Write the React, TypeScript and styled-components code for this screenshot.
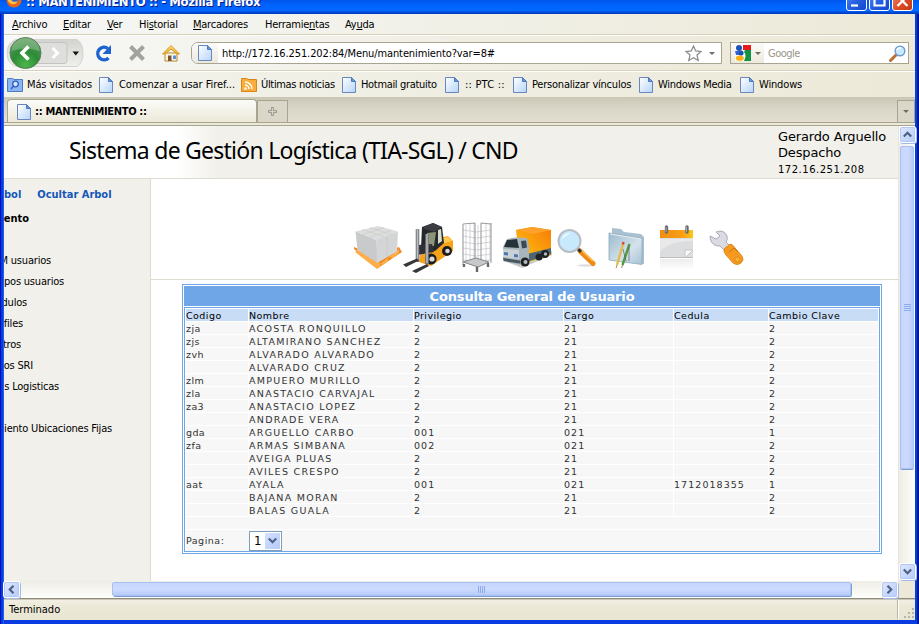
import React from "react";
import styled, { createGlobalStyle } from "styled-components";

const tahoma = '"DejaVu Sans Condensed", "DejaVu Sans", sans-serif';
const verdana = '"DejaVu Sans", sans-serif';

const Global = createGlobalStyle`
  *, *::before, *::after { box-sizing: border-box; }
  body { margin: 0; background: #0831d9; font: 11px/14px ${tahoma}; color: #000; }
  svg { display: block; flex: none; }
`;

const Window = styled.div`
  width: 919px;
  height: 624px;
  overflow: hidden;
  display: flex;
  flex-direction: column;
  background: linear-gradient(90deg, #0010b8 0 1px, #0a3be0 1px 3px, #1763ee 3px 4px, #0a3be0 4px 915px, #0340d8 915px 917px, #001ea0 917px 918px, #00138c 918px);
`;
const TitleBar = styled.div`
  height: 14px;
  flex: none;
  display: flex;
  justify-content: space-between;
  padding: 0 6px 0 6px;
  overflow: hidden;
  background: linear-gradient(#0054e9, #0062fb 30%, #0068ff 75%, #0047d2 90%, #003ab8);
`;
const Caption = styled.div`
  display: flex;
  gap: 4px;
  height: 20px;
  margin-top: -8px;
  font: bold 13px/20px ${tahoma};
  letter-spacing: -0.4px;
  white-space: nowrap;
  color: #fff;
  text-shadow: 1px 1px #0a1883;
`;
const CaptionButtons = styled.div`
  display: flex;
  gap: 2px;
  margin-top: -10px;
`;
const CaptionButton = styled.div<{ $close?: boolean }>`
  width: 21px;
  height: 21px;
  border: 1px solid #fff;
  border-radius: 3px;
  background: ${(p) => (p.$close ? "linear-gradient(135deg,#f08a6c,#dc4a22 60%,#c03a12)" : "linear-gradient(135deg,#5a8cf5,#2760e4 50%,#1546c8)")};
`;
const Client = styled.div`
  margin: 0 4px;
  height: 606px;
  flex: none;
  display: flex;
  flex-direction: column;
  background: #ece9d8;
`;
const MenuBar = styled.nav`
  height: 21px;
  flex: none;
  display: grid;
  grid-template-columns: 51px 44px 32px 54px 72px 80px 60px;
  padding: 4px 0 0 8px;
  border-bottom: 1px solid #d6d0b6;
  background: linear-gradient(90deg, #f6f7f6, #ece9d8);
  letter-spacing: -0.25px;
  white-space: nowrap;
`;
const Toolbar = styled.div`
  height: 36px;
  flex: none;
  display: flex;
  align-items: center;
  border-top: 1px solid #fff;
  border-bottom: 1px solid #d8d2b8;
  background: linear-gradient(90deg, #f7f8f7, #efece0 60%, #ece9d8);
`;
const NavIcons = styled.div`
  width: 187px;
  flex: none;
`;
const Field = styled.div<{ $w: number; $ml?: number }>`
  width: ${(p) => p.$w}px;
  height: 22px;
  flex: none;
  margin-left: ${(p) => p.$ml ?? 0}px;
  display: flex;
  align-items: center;
  border: 1px solid #a7a490;
  background: #fff;
  overflow: hidden;
  white-space: nowrap;
`;
const AddressField = styled(Field)`
  border-radius: 7px 0 0 7px;
  letter-spacing: -0.11px;
`;
const FieldIcon = styled.div<{ $w: number; $plain?: boolean }>`
  width: ${(p) => p.$w}px;
  height: 100%;
  flex: none;
  display: flex;
  align-items: center;
  justify-content: center;
  gap: 4px;
  background: ${(p) => (p.$plain ? "none" : "linear-gradient(#fbfbf9, #ece9dc)")};
`;
const FieldText = styled.span<{ $hint?: boolean }>`
  flex: 1;
  padding: 2px 0 0 4px;
  color: ${(p) => (p.$hint ? "#99968a" : "#000")};
  letter-spacing: ${(p) => (p.$hint ? "-0.5px" : "inherit")};
`;
const Bookmarks = styled.div`
  height: 26px;
  flex: none;
  display: flex;
  align-items: center;
  border-top: 1px solid #fff;
  background: linear-gradient(90deg, #f3f3ed, #ece9d8);
  padding-left: 3px;
`;
const Bookmark = styled.div<{ $w: number; $gap: number; $ls: number }>`
  width: ${(p) => p.$w}px;
  flex: none;
  display: flex;
  align-items: center;
  gap: ${(p) => p.$gap}px;
  letter-spacing: ${(p) => p.$ls}px;
  white-space: nowrap;
`;
const TabStrip = styled.div`
  height: 26px;
  flex: none;
  display: flex;
  align-items: flex-end;
  border-bottom: 1px solid #a7a490;
  background: linear-gradient(#c9c6b6, #d6d3c4 35%, #e3e0d1);
`;
const Tab = styled.div`
  width: 250px;
  height: 23px;
  margin: 0 0 0 3px;
  display: flex;
  align-items: center;
  gap: 4px;
  padding: 2px 0 0 9px;
  border: 1px solid #a7a490;
  border-bottom: 0;
  border-radius: 4px 4px 0 0;
  background: linear-gradient(#fbfbf8, #ece9d8);
  font-weight: bold;
  letter-spacing: -0.32px;
`;
const TabButton = styled.div<{ $w: number }>`
  width: ${(p) => p.$w}px;
  height: 22px;
  display: flex;
  align-items: center;
  justify-content: center;
  border: 1px solid #a7a490;
  border-bottom: 0;
  background: #dad7c8;
`;
const Grow = styled.div`
  flex: 1;
`;
const ContentEdge = styled.div`
  height: 3px;
  flex: none;
  background: #ece9d8;
  border-bottom: 1px solid #a7a490;
`;
const Viewport = styled.div`
  height: 455px;
  flex: none;
  display: flex;
`;
const Page = styled.main`
  width: 894px;
  display: flex;
  flex-direction: column;
  background: #fff;
`;
const Banner = styled.header`
  height: 53px;
  flex: none;
  display: flex;
  justify-content: space-between;
  border-bottom: 1px solid #dedbcf;
  background: linear-gradient(90deg, #fff 172px, #f1f0eb 215px);
`;
const SystemName = styled.h1`
  margin: 5px 0 0 65px;
  font: 23px/38px "Noto Sans", sans-serif;
  letter-spacing: -0.75px;
  white-space: nowrap;
`;
const UserInfo = styled.div`
  width: 120px;
  padding-top: 3px;
  font: 13px/16px ${verdana};
  letter-spacing: -0.15px;
  white-space: nowrap;
`;
const Address = styled.div`
  font-size: 10px;
  line-height: 17px;
  letter-spacing: 0.5px;
`;
const Body = styled.div`
  flex: 1;
  display: flex;
`;
const Sidebar = styled.aside`
  width: 147px;
  flex: none;
  border-right: 1px solid #dedbcf;
  background: #f1f0eb;
  padding-top: 5px;
`;
const TreeActions = styled.div`
  display: flex;
  gap: 16px;
  height: 24px;
  line-height: 21px;
  font-weight: bold;
  color: #1557b8;
  white-space: nowrap;
`;
const TreeItem = styled.div<{ $end: number; $bold?: boolean; $rows?: number }>`
  width: ${(p) => p.$end}px;
  height: ${(p) => (p.$rows ?? 1) * 21}px;
  line-height: 21px;
  display: flex;
  justify-content: flex-end;
  overflow: hidden;
  white-space: nowrap;
  letter-spacing: ${(p) => (p.$bold ? 0 : -0.2)}px;
  font-weight: ${(p) => (p.$bold ? "bold" : "normal")};
`;
const Main = styled.section`
  flex: 1;
`;
const IconStrip = styled.div`
  height: 101px;
  display: flex;
  padding: 41px 0 0 203px;
  border-bottom: 1px solid #dedbcf;
`;
const Panel = styled.div`
  width: 700px;
  height: 270px;
  margin: 4px 0 0 31px;
  padding: 1px;
  border: 1px solid #6ea6e8;
`;
const PanelTitle = styled.div`
  height: 20px;
  margin-bottom: 1px;
  text-align: center;
  font: bold 13px/22px ${verdana};
  letter-spacing: -0.16px;
  color: #fff;
  background: #6ea6e8;
`;
const Grid = styled.div`
  height: 245px;
  padding: 1px;
  border: 1px solid #6ea6e8;
  display: grid;
  grid-template-columns: 62px 164px 149px 109px 94px 109px;
  grid-auto-rows: 12px;
  gap: 1px;
  font: 9.5px/14px ${verdana};
  white-space: nowrap;
  color: #333;
`;
const HeadCell = styled.div`
  background: #c8dcf6;
  color: #000;
  letter-spacing: 0.45px;
`;
const Cell = styled.div<{ $kind: "code" | "name" | "num" }>`
  background: #f7f7f7;
  letter-spacing: ${(p) => (p.$kind === "name" ? 1.28 : p.$kind === "num" ? 1.05 : 0.4)}px;
`;
const BlankRow = styled.div`
  grid-column: 1 / -1;
  background: #f7f7f7;
`;
const Pager = styled.div`
  grid-column: 1 / -1;
  height: 21px;
  display: flex;
  align-items: center;
  background: #f7f7f7;
`;
const PagerLabel = styled.span`
  width: 63px;
  padding-top: 1px;
  letter-spacing: 0.5px;
`;
const Select = styled.div`
  width: 33px;
  height: 20px;
  display: flex;
  align-items: center;
  justify-content: space-between;
  padding: 1px 1px 1px 4px;
  border: 1px solid #7f9db9;
  background: #fff;
  font: 13px/16px ${tahoma};
  color: #000;
`;
const SelectArrow = styled.div`
  width: 15px;
  height: 16px;
  display: grid;
  place-items: center;
  border-radius: 1px;
  background: linear-gradient(135deg, #d5e1fd, #b4caf8);
`;
const VScroll = styled.div`
  width: 17px;
  flex: none;
  display: flex;
  flex-direction: column;
  padding: 1px 0 0 1px;
  background: linear-gradient(90deg, #eeede5, #fefefb);
  border-left: 1px solid #e8e6dc;
`;
const HScroll = styled.div`
  height: 18px;
  flex: none;
  display: flex;
  padding-top: 1px;
  border-bottom: 1px solid #8f8c7d;
  background: linear-gradient(#eeede5, #fefefb);
`;
const ScrollButton = styled.div`
  width: 15px;
  height: 15px;
  flex: none;
  display: grid;
  place-items: center;
  border: 1px solid #b4c8f5;
  border-radius: 2px;
  box-shadow: 0 0 0 1px #fff, 1px 1px 0 1px #9fb9e8;
  background: linear-gradient(135deg, #dce6fe, #b9cdfb);
`;
const VThumb = styled.div`
  width: 14px;
  height: 323px;
  margin: 4px 0 95px;
  display: grid;
  place-items: center;
  border: 1px solid #a9c0f3;
  border-radius: 2px;
  box-shadow: 0 1px 0 #7c9fd3;
  background: linear-gradient(90deg, #c6d5fd, #cddbff 50%, #b7cbfa);
`;
const HThumb = styled.div`
  width: 739px;
  height: 14px;
  margin: 0 31px 0 93px;
  display: grid;
  place-items: center;
  border: 1px solid #a9c0f3;
  border-radius: 2px;
  box-shadow: 1px 1px 0 #7c9fd3;
  background: linear-gradient(#c6d5fd, #cddbff 50%, #b7cbfa);
`;
const Corner = styled.div`
  flex: 1;
  margin: -1px 0 0 2px;
  background: #ece9d8;
`;
const StatusBar = styled.footer`
  flex: 1;
  display: flex;
  align-items: center;
  justify-content: space-between;
  padding: 0 0 1px 5px;
  border-top: 1px solid #c9c6b8;
  background: linear-gradient(#f1efe4, #ece9d8 30%, #e8e5d2);
`;
const GripArea = styled.div`
  width: 18px;
  height: 19px;
  display: flex;
  align-items: flex-end;
  justify-content: flex-end;
  border-left: 1px solid #b8b5a4;
  box-shadow: inset 1px 0 #fff;
`;

const Underlined = ({ text, at }: { text: string; at: number }) => (
  <span>{text.slice(0, at)}<u>{text[at]}</u>{text.slice(at + 1)}</span>
);

const FileIcon = () => (
  <svg width="14" height="16" viewBox="0 0 14 16">
    <defs><linearGradient id="file" x1="0" y1="0" x2="1" y2="1"><stop offset="0" stopColor="#fff" /><stop offset="1" stopColor="#b5d5fb" /></linearGradient></defs>
    <path d="M.5.5h9l4 4v11H.5z" fill="url(#file)" stroke="#6b86bd" />
    <path d="M9.5.5v4h4z" fill="#5e9ae4" stroke="#4f79bf" />
  </svg>
);
const FolderIcon = ({ feed }: { feed?: boolean }) => (
  <svg width="16" height="15" viewBox="0 0 16 15">
    <path d="M.5 2.500V1.500h5l1.500 1h8.500v12H.5z" fill={feed ? "#f8ad3c" : "#8db5f1"} stroke={feed ? "#d88419" : "#4d7bca"} />
    {feed ? (
      <g fill="none" stroke="#fff" strokeWidth="1.500"><circle cx="4.500" cy="11.500" r=".6" /><path d="M4 8a4 4 0 0 1 4 4M4 5a7 7 0 0 1 7 7" /></g>
    ) : (
      <g fill="#d7e7ff" stroke="#2b5fc0" strokeWidth="1.300"><circle cx="8.500" cy="7" r="2.800" /><path d="M6.500 9.200 4 12" /></g>
    )}
  </svg>
);
const Caret = ({ color = "#6f6d62" }: { color?: string }) => (
  <svg width="6" height="3" viewBox="0 0 6 3"><path d="M0 0h6L3 3z" fill={color} /></svg>
);
const Chevron = ({ d }: { d: string }) => (
  <svg width="9" height="9" viewBox="0 0 9 9"><path d={d} fill="none" stroke="#4d6185" strokeWidth="2.200" /></svg>
);
const DOWN = "M.8 2.500 4.500 6.200 8.200 2.500";
const UP = "M.8 6.500 4.500 2.800 8.200 6.500";
const LEFT = "M6.500.8 2.800 4.500 6.500 8.200";
const RIGHT = "M2.500.8 6.200 4.500 2.500 8.200";

const FirefoxIcon = () => (
  <svg width="16" height="16" viewBox="0 0 16 16">
    <circle cx="8" cy="8" r="7.500" fill="#e8651a" />
    <circle cx="8.500" cy="6.500" r="4.500" fill="#3566c0" />
    <path d="M2 5c1 0 3 2 4 4 2 1.500 5 1 6-1-1 5-7 6-10 1z" fill="#ffc247" />
  </svg>
);
const NavDrawing = () => (
  <svg width="187" height="34" viewBox="4 36 187 34">
    <defs>
      <linearGradient id="pill" x1="0" y1="0" x2="0" y2="1"><stop offset="0" stopColor="#d3d3d0" /><stop offset="1" stopColor="#efefec" /></linearGradient>
      <radialGradient id="green" cx=".5" cy=".9" r=".9"><stop offset="0" stopColor="#4cb84a" /><stop offset=".5" stopColor="#2c8b37" /><stop offset="1" stopColor="#5f9d60" /></radialGradient>
      <linearGradient id="roof" x1="0" y1="0" x2="0" y2="1"><stop offset="0" stopColor="#ffe27a" /><stop offset="1" stopColor="#f2ae1c" /></linearGradient>
    </defs>
    <path d="M16 39.500h61q6 4 6 13.500t-6 13.500H16q-9-3-9-13.500t9-13.500z" fill="url(#pill)" stroke="#d3d2cd" />
    <path d="M36 42.500h28q3 0 3 3v15q0 3-3 3H36z" fill="#dededc" stroke="#c4c3bf" />
    <path d="m52.500 48 5 5-5 5" fill="none" stroke="#fff" strokeWidth="3" />
    <path d="M72.500 51.500h6.500l-3.250 4z" fill="#111" />
    <circle cx="25.500" cy="53" r="15.500" fill="url(#green)" stroke="#5a7d5b" />
    <path d="M11.500 51a14 13 0 0 1 28 0q-14-5-28 0z" fill="#fff" opacity=".22" />
    <path d="m28.500 46.500-6.500 6.500 6.500 6.500" fill="none" stroke="#fff" strokeWidth="3.600" />
    <path d="M108.500 58a6.300 6.300 0 1 1-.6-9.500" fill="none" stroke="#1c62d0" strokeWidth="3.400" />
    <path d="M111 45v9h-8.500z" fill="#1c62d0" />
    <path d="m130.500 46.500 13 13m0-13-13 13" stroke="#a2a29e" strokeWidth="4" />
    <path d="M165 53h12v8h-12z" fill="#fdf6df" stroke="#b5852f" />
    <path d="M171 45.500 162.500 54h2.500l6-5 6 5h2.500z" fill="url(#roof)" stroke="#d19a26" />
    <path d="M168 55.500h3.500V61H168z" fill="#7d5132" /><path d="M173 55.500h3V59h-3z" fill="#5892df" />
  </svg>
);
const StarIcon = () => (
  <svg width="17" height="17" viewBox="0 0 17 17"><path d="m8.500 1 2.200 4.900 5.300.6-4 3.600 1.200 5.400-4.700-2.700-4.700 2.700L5 10.100 1 6.500l5.300-.6z" fill="#fff" stroke="#8e8e8e" strokeWidth="1.300" /></svg>
);
const GoogleIcon = () => (
  <svg width="16" height="16" viewBox="0 0 16 16">
    <path d="M0 0h16v16H0z" fill="#fff" /><path d="M8 0h8v5H8z" fill="#e61b1b" /><path d="M10 5h6v11H9q3-6 0-9z" fill="#139344" />
    <circle cx="4" cy="3" r="3" fill="#1c52b5" /><circle cx="6" cy="8" r="2.600" fill="#1c52b5" /><path d="M0 6h4v4H1z" fill="#2b66cc" /><ellipse cx="4.800" cy="13.200" rx="4" ry="2.600" fill="#fbb016" />
  </svg>
);
const SearchIcon = () => (
  <svg width="19" height="17" viewBox="0 0 19 17">
    <path d="m7 10-5.500 5.500" stroke="#b96d31" strokeWidth="3" strokeLinecap="round" />
    <circle cx="11" cy="6" r="4.800" fill="#c9eafd" stroke="#6d9ed0" strokeWidth="1.500" />
    <path d="M8 5q1-2.500 4-2.300" stroke="#fff" strokeWidth="1.500" fill="none" />
  </svg>
);
const CaptionGlyph = ({ d }: { d: string }) => (
  <svg width="19" height="19" viewBox="0 0 19 19"><path d={d} fill="none" stroke="#fff" strokeWidth="2.200" /></svg>
);

const Pallet = () => (
  <svg width="48" height="56" viewBox="354 220 48 56">
    <path d="m354 249 24 19 24-16-3-5-24 9-21-9z" fill="#f08a20" />
    <path d="m355 252 22 17 3-2v-4l-22-15zm25 12 3 1 5-4v-4l5 1 6-5v-4" fill="#ffad48" />
    <path d="M355.500 231.500 378 226l20 5.500-20 9z" fill="#dcdddd" />
    <path d="m355.500 231.500 21 8.500 1 23-20-13z" fill="#c9cacc" />
    <path d="m376.500 240 21.500-8.500-1 20-20 11.500z" fill="#d4d5d6" />
    <path d="m362 229.500 22 7m-14-9 21 7m-28 0 21-7m-15 10 22-7" stroke="#cdccc6" fill="none" strokeWidth=".7" /><path d="M387 236v21" stroke="#c8c9ca" strokeWidth=".7" />
  </svg>
);
const Forklift = () => (
  <svg width="53" height="56" viewBox="402 220 53 56">
    <path d="m435 239 13-3 5 5v10l-22 15-12-4 1-7 14-4z" fill="#f6a31a" />
    <path d="m439 239 9-2 4 4-11 3z" fill="#ffca4d" />
    <path d="m422 227 11-4 9 4 2 16-9 8-14-3z" fill="#27282b" />
    <path d="m427 233 9-1-2 14-6 1z" fill="#8b9679" /><path d="m438 230 3-1 1 12-4 3z" fill="#d7decb" />
    <path d="m422 228 11-5 9 4-8 5z" fill="#3c3d42" />
    <path d="m418 245 14-1 2 8-16 3z" fill="#303136" />
    <circle cx="431" cy="259" r="5.600" fill="#1c1c1f" /><circle cx="432" cy="259" r="2.600" fill="#d8d8d8" />
    <circle cx="447" cy="251" r="5" fill="#1c1c1f" /><circle cx="447.500" cy="251" r="2.300" fill="#d8d8d8" />
    <path d="M417.500 229v33M427 234v30" stroke="#74777c" strokeWidth="3.600" /><path d="M417.500 229v32M427 234v29" stroke="#b9bcc0" strokeWidth="1.500" />
    <path d="m403 264.500 14-6 2 2-13 6.500zM412 271l15-7 2 2-13 7z" fill="#34363a" />
  </svg>
);
const Cage = () => (
  <svg width="45" height="56" viewBox="455 220 45 56">
    <g fill="none" stroke="#c0c2c4" strokeWidth=".7">
      <path d="M466 225v38m4-39v38m4-39v39m4-37v37m8-38v37m4-37v37M463 230l13 2 15-2M463 236l13 2 15-2M463 242l13 2 15-2M463 248l13 2 15-2M463 254l13 2 15-2M463 260l13 1 15-1" />
    </g>
    <path d="M463 224v41m12-42v41m6-41v41m10-41v40M463 224l12-1m6 0 10 1" fill="none" stroke="#9a9da0" strokeWidth="1.100" />
    <path d="m463 262 13-4 13 4-11 5z" fill="#c6c8c9" stroke="#85888b" /><path d="M464 264v3m13 0v5m11-9v4" stroke="#68696c" strokeWidth="2.400" />
  </svg>
);
const Truck = () => (
  <svg width="55" height="56" viewBox="500 220 55 56">
    <defs><linearGradient id="cargo" x1="1" y1="0" x2="0" y2="1"><stop offset="0" stopColor="#f77c08" /><stop offset=".6" stopColor="#fba90c" /><stop offset="1" stopColor="#ffe21a" /></linearGradient></defs>
    <path d="m507 262 15 6 30-13v-4z" fill="#aaa" opacity=".6" />
    <path d="m516 230 16-3 19 3v25l-22 7-10-5z" fill="url(#cargo)" /><path d="m516 230 16-3 19 3-18 4z" fill="#ffa12b" />
    <path d="m527 254 24-6v6l-24 8z" fill="#4e6671" />
    <path d="m507 239 8-1.500 12 .5 2 8v16l-9 3-17-4v-14z" fill="#a9b5bd" />
    <path d="m507 240 10-1 2 9-15-1z" fill="#26323a" /><path d="m521 241 5-.5 1 7-5 1z" fill="#3b4a53" />
    <path d="m503 249 16 1v9l-16-2z" fill="#cbd2d6" /><path d="m504 252 4 .5v3l-4-.5zm10 2 4 .5v3l-4-.5z" fill="#4c77b5" /><path d="m503 258 17 2.500v3L504 261z" fill="#4a565e" />
    <circle cx="525" cy="262" r="4.500" fill="#202326" /><circle cx="525.500" cy="262" r="2" fill="#b5babd" />
    <circle cx="545" cy="254" r="4" fill="#202326" /><circle cx="545.500" cy="254" r="1.700" fill="#b5babd" /><circle cx="539" cy="257" r="3.500" fill="#202326" />
  </svg>
);
const Magnifier = () => (
  <svg width="47" height="56" viewBox="555 220 47 56">
    <ellipse cx="586" cy="265.500" rx="9" ry="1.200" fill="#ddd" />
    <path d="m580 251 13 12.500" stroke="#f08a14" strokeWidth="5" strokeLinecap="round" /><path d="m581 250 12 11" stroke="#ffbd55" strokeWidth="1.500" />
    <path d="m577 248 4 4" stroke="#333" strokeWidth="3" />
    <circle cx="569.500" cy="241" r="11" fill="#c8e8fb" stroke="#b8bec4" strokeWidth="2" /><path d="M562 240q1-7 9-7-6 2-9 7z" fill="#fff" />
  </svg>
);
const PencilFolder = () => (
  <svg width="50" height="56" viewBox="602 220 50 56">
    <defs><linearGradient id="pf" x1="0" y1="0" x2="1" y2="1"><stop offset="0" stopColor="#9dbace" /><stop offset=".6" stopColor="#d4e2ec" /><stop offset="1" stopColor="#a8c1d3" /></linearGradient></defs>
    <path d="m612 228 9 1 3 3 17 2 3 3v27l-32-4z" fill="#a9c0d1" />
    <path d="m609 233 33 5.500v26L609 260z" fill="url(#pf)" stroke="#8daabd" strokeWidth=".8" /><path d="m610 234 31 5" stroke="#e7f0f6" />
    <path d="m623 244-6 21" stroke="#e5bb4a" strokeWidth="2.400" /><path d="m623.500 242-.6 2.500" stroke="#d84630" strokeWidth="2.400" />
    <path d="m629.500 244-7 21" stroke="#4d9d3c" strokeWidth="2.400" /><path d="m617 265-.9 3m6.500-3-1 3" stroke="#a58a66" /><path d="M623 249l3 12m3-15v15" stroke="#56606a" strokeWidth=".7" />
  </svg>
);
const Calendar = () => (
  <svg width="50" height="56" viewBox="652 220 50 56">
    <defs><linearGradient id="cal" x1="0" y1="0" x2="1" y2="0"><stop offset="0" stopColor="#f28c12" /><stop offset=".7" stopColor="#f99f18" /><stop offset="1" stopColor="#ffc812" /></linearGradient>
      <linearGradient id="refl" x1="0" y1="0" x2="0" y2="1"><stop offset="0" stopColor="#ededed" /><stop offset="1" stopColor="#fff" /></linearGradient></defs>
    <path d="M660 230h33v9h-33z" fill="url(#cal)" /><path d="M660 238h33v20h-33z" fill="#dcdddf" /><path d="M660 251q10-10 33-10v-2h-33z" fill="#e9e9ea" />
    <path d="M660 257.500h33" stroke="#bbb" /><path d="M685 258v-8h8z" fill="#fafafa" stroke="#c5c5c5" /><path d="M660 259h33v11h-33z" fill="url(#refl)" />
    <path d="M666.500 227v5m20.500-5v5" stroke="#686b6e" strokeWidth="3.400" strokeLinecap="round" /><path d="M666 227v5m20.500-5v5" stroke="#a8abad" />
  </svg>
);
const Wrench = () => (
  <svg width="50" height="56" viewBox="702 220 50 56">
    <path d="M716 232q8-3 11 4 1 4-1 6l3 3-5 5-4-4q-7 0-9-5-1-3-1-5l6 3 4-3z" fill="#dadbe2" stroke="#a9abb6" />
    <path d="m725 248 4.500-3.500q1.500-1 3 .5l9.500 11q2.500 4-1 7t-7.500.5l-8-9q-3-4-.5-6.500z" fill="#f59a1f" stroke="#dc7f12" strokeWidth=".8" />
    <path d="m729 252 5-4 4 4" fill="none" stroke="#c67512" /><circle cx="737.500" cy="259.500" r="2.600" fill="#f7b032" stroke="#db8217" strokeWidth=".8" />
  </svg>
);

const menu: [string, number][] = [["Archivo", 0], ["Editar", 0], ["Ver", 0], ["Historial", 2], ["Marcadores", 0], ["Herramientas", 8], ["Ayuda", 2]];
const bookmarks: { label: string; w: number; gap: number; ls: number; icon?: "search" | "feed" }[] = [
  { label: "Más visitados", w: 92, gap: 4, ls: -0.15, icon: "search" },
  { label: "Comenzar a usar Firef...", w: 142, gap: 6, ls: -0.04 },
  { label: "Últimas noticias", w: 101, gap: 4, ls: -0.33, icon: "feed" },
  { label: "Hotmail gratuito", w: 103, gap: 5, ls: -0.33 },
  { label: ":: PTC ::", w: 68, gap: 6, ls: 0.2 },
  { label: "Personalizar vínculos", w: 126, gap: 5, ls: -0.22 },
  { label: "Windows Media", w: 101, gap: 5, ls: -0.27 },
  { label: "Windows", w: 70, gap: 5, ls: -0.15 },
];
const tree: { text: string; end: number; bold?: boolean; rows?: number }[] = [
  { text: "ento", end: 25, bold: true, rows: 2 },
  { text: "M usuarios", end: 47 },
  { text: "ipos usuarios", end: 60 },
  { text: "dulos", end: 23 },
  { text: "files", end: 19 },
  { text: "tros", end: 17 },
  { text: "os SRI", end: 29 },
  { text: "s Logisticas", end: 55, rows: 2 },
  { text: "iento Ubicaciones Fijas", end: 108 },
];
const columns = ["Codigo", "Nombre", "Privilegio", "Cargo", "Cedula", "Cambio Clave"];
const rows = [
  ["zja", "ACOSTA RONQUILLO", "2", "21", "", "2"],
  ["zjs", "ALTAMIRANO SANCHEZ", "2", "21", "", "2"],
  ["zvh", "ALVARADO ALVARADO", "2", "21", "", "2"],
  ["", "ALVARADO CRUZ", "2", "21", "", "2"],
  ["zlm", "AMPUERO MURILLO", "2", "21", "", "2"],
  ["zla", "ANASTACIO CARVAJAL", "2", "21", "", "2"],
  ["za3", "ANASTACIO LOPEZ", "2", "21", "", "2"],
  ["", "ANDRADE VERA", "2", "21", "", "2"],
  ["gda", "ARGUELLO CARBO", "001", "021", "", "1"],
  ["zfa", "ARMAS SIMBANA", "002", "021", "", "2"],
  ["", "AVEIGA PLUAS", "2", "21", "", "2"],
  ["", "AVILES CRESPO", "2", "21", "", "2"],
  ["aat", "AYALA", "001", "021", "1712018355", "1"],
  ["", "BAJANA MORAN", "2", "21", "", "2"],
  ["", "BALAS GUALA", "2", "21", "", "2"],
];

export default function App() {
  return (
    <Window>
      <Global />
      <TitleBar>
        <Caption><FirefoxIcon />:: MANTENIMIENTO :: - Mozilla Firefox</Caption>
        <CaptionButtons>
          <CaptionButton><CaptionGlyph d="M4 14.500h7" /></CaptionButton>
          <CaptionButton><CaptionGlyph d="M4.500 4.500h10v10h-10z" /></CaptionButton>
          <CaptionButton $close><CaptionGlyph d="m4.500 5 10 10m0-10-10 10" /></CaptionButton>
        </CaptionButtons>
      </TitleBar>
      <Client>
        <MenuBar>{menu.map(([text, at]) => <Underlined key={text} text={text} at={at} />)}</MenuBar>
        <Toolbar>
          <NavIcons><NavDrawing /></NavIcons>
          <AddressField $w={531}>
            <FieldIcon $w={26}><FileIcon /></FieldIcon>
            <FieldText>http://172.16.251.202:84/Menu/mantenimiento?var=8#</FieldText>
            <StarIcon />
            <FieldIcon $w={19} $plain><Caret /></FieldIcon>
          </AddressField>
          <Field $w={179} $ml={8}>
            <FieldIcon $w={33}><GoogleIcon /><Caret /></FieldIcon>
            <FieldText $hint>Google</FieldText>
            <SearchIcon />
          </Field>
        </Toolbar>
        <Bookmarks>
          {bookmarks.map((b) => (
            <Bookmark key={b.label} $w={b.w} $gap={b.gap} $ls={b.ls}>
              {b.icon ? <FolderIcon feed={b.icon === "feed"} /> : <FileIcon />}{b.label}
            </Bookmark>
          ))}
        </Bookmarks>
        <TabStrip>
          <Tab><FileIcon />:: MANTENIMIENTO ::</Tab>
          <TabButton $w={31}><svg width="9" height="9" viewBox="0 0 9 9"><path d="M3.500.5h2v3h3v2h-3v3h-2v-3h-3v-2h3z" fill="#d6d3c6" stroke="#9b998e" /></svg></TabButton>
          <Grow />
          <TabButton $w={18}><Caret /></TabButton>
        </TabStrip>
        <ContentEdge />
        <Viewport>
          <Page>
            <Banner>
              <SystemName>Sistema de Gestión Logística (TIA-SGL) / CND</SystemName>
              <UserInfo>Gerardo Arguello<br />Despacho<Address>172.16.251.208</Address></UserInfo>
            </Banner>
            <Body>
              <Sidebar>
                <TreeActions><span>bol</span><span>Ocultar Arbol</span></TreeActions>
                {tree.map((t) => <TreeItem key={t.text} $end={t.end} $bold={t.bold} $rows={t.rows}>{t.text}</TreeItem>)}
              </Sidebar>
              <Main>
                <IconStrip><Pallet /><Forklift /><Cage /><Truck /><Magnifier /><PencilFolder /><Calendar /><Wrench /></IconStrip>
                <Panel>
                  <PanelTitle>Consulta General de Usuario</PanelTitle>
                  <Grid>
                    {columns.map((c) => <HeadCell key={c}>{c}</HeadCell>)}
                    {rows.map((r) => r.map((v, i) => (
                      <Cell key={r[1] + i} $kind={i === 0 ? "code" : i === 1 ? "name" : "num"}>{v}</Cell>
                    )))}
                    <BlankRow />
                    <Pager>
                      <PagerLabel>Pagina:</PagerLabel>
                      <Select>1<SelectArrow><Chevron d={DOWN} /></SelectArrow></Select>
                    </Pager>
                  </Grid>
                </Panel>
              </Main>
            </Body>
          </Page>
          <VScroll>
            <ScrollButton><Chevron d={UP} /></ScrollButton>
            <VThumb><svg width="7" height="8" viewBox="0 0 7 8"><path d="M0 .5h7m-7 2h7m-7 2h7m-7 2h7" stroke="#8cabee" /></svg></VThumb>
            <ScrollButton><Chevron d={DOWN} /></ScrollButton>
          </VScroll>
        </Viewport>
        <HScroll>
          <ScrollButton><Chevron d={LEFT} /></ScrollButton>
          <HThumb><svg width="8" height="7" viewBox="0 0 8 7"><path d="M.5 0v7m2-7v7m2-7v7m2-7v7" stroke="#8cabee" /></svg></HThumb>
          <ScrollButton><Chevron d={RIGHT} /></ScrollButton>
          <Corner />
        </HScroll>
        <StatusBar>
          Terminado
          <GripArea><svg width="12" height="12" viewBox="0 0 12 12"><path d="M9 1h2v2H9zM5 5h2v2H5zm4 0h2v2H9zM1 9h2v2H1zm4 0h2v2H5zm4 0h2v2H9z" fill="#b8b4a2" /></svg></GripArea>
        </StatusBar>
      </Client>
    </Window>
  );
}
